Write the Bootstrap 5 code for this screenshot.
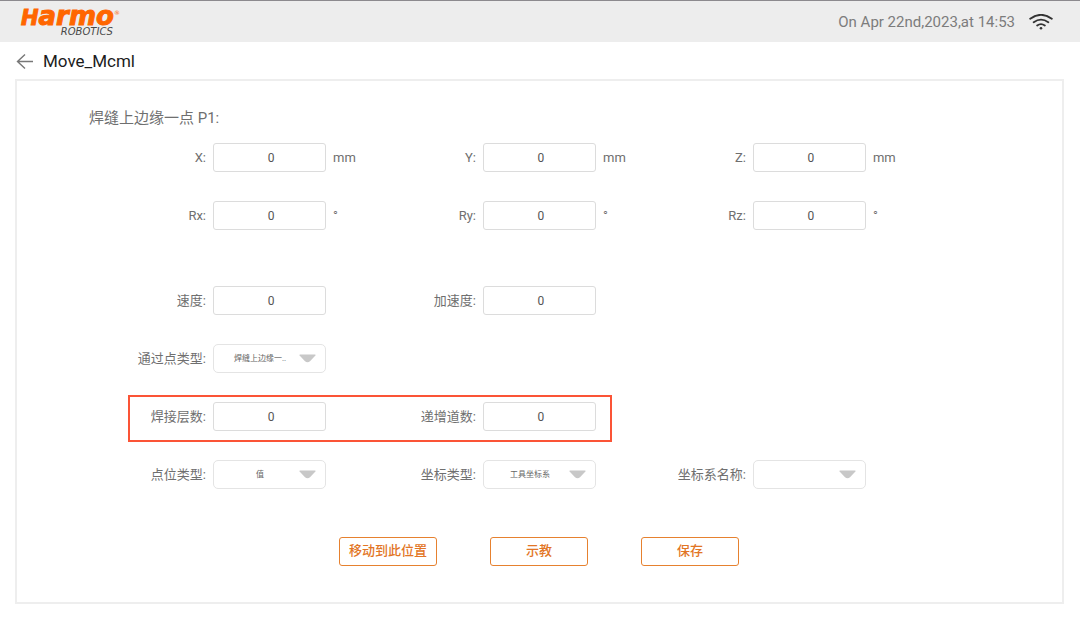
<!DOCTYPE html>
<html lang="zh-CN">
<head>
<meta charset="utf-8">
<meta name="viewport" content="width=device-width, initial-scale=1">
<title>Move_Mcml</title>
<link href="https://cdn.jsdelivr.net/npm/bootstrap@5.3.0/dist/css/bootstrap.min.css" rel="stylesheet">
<style>
  body { font-family: Roboto, "Noto Sans CJK SC", sans-serif; font-size: 13px; line-height: 20px; color: #6f6f6f; background: #fff; }
  .topbar { height: 42px; background: #ededed; border-top: 1px solid #8c8a8e; padding: 0 27px 0 21px; }
  .brand { color: #ff6600; text-decoration: none; font-family: "DejaVu Sans", sans-serif; font-weight: 700; font-style: italic; display: grid; }
  .brand-name { font-size: 26px; line-height: 20px; height: 20px; -webkit-text-stroke: 1px #ff6600; }
  .brand-cap { font-size: 21px; }
  .brand-reg { font-size: 6px; font-weight: 400; vertical-align: 10px; line-height: 1; -webkit-text-stroke: 0; }
  .brand-sub { font-weight: 400; font-size: 10px; line-height: 12px; color: #484848; justify-self: end; padding-right: 7px; }
  .clock { font-size: 15px; color: #7c7c7c; }
  .status { gap: 14px; }
  .titlebar { padding: 9px 16px 8px; gap: 9px; }
  .titlebar h1 { font-size: 17px; line-height: 20px; color: #1c1c1c; font-weight: 400; }
  .panel { margin: 0 16px 15px 15px; border: 2px solid #eee; border-radius: 0; padding: 27px 175px 36px 60px; }
  .panel h2 { font-size: 15px; line-height: 20px; font-weight: 400; margin: 0 0 15px 12px; }
  .form-rows { display: grid; row-gap: 29px; }
  .spaced { margin-top: 27px; }
  .field { display: flex; align-items: center; gap: 7px; }
  .field label { flex: 0 0 129px; text-align: right; }
  .field .form-control, .field .form-select {
    flex: 0 0 113px; width: 113px; height: 29px; border: 1px solid #dcdcdc; border-radius: 3px;
    padding: 0 0 0 3px; text-align: center; font-size: 12px; line-height: 16px; color: #555; background-color: #fff; }
  .field .form-select {
    font-size: 8px; color: #666; border-color: #e4e4e4; border-radius: 5px; padding: 0 28px 0 9px; text-align-last: center;
    background-image: url("data:image/svg+xml,%3Csvg xmlns='http://www.w3.org/2000/svg' viewBox='0 0 17 9'%3E%3Cpath fill='%23c8c8c8' d='M1 .5h15q1 .2.4 1L11 7.3Q8.500 9.200 6 7.300L.6 1.500Q0 .7 1 .5z'/%3E%3C/svg%3E");
    background-size: 17px 9px; background-position: right 9px center; }
  .unit-deg { align-self: flex-start; line-height: 29px; }
  .marked { position: relative; }
  .marked::before { content: ""; position: absolute; inset: -7px 5px -11px 51px; border: 2px solid #fb5436; pointer-events: none; }
  .actions { margin: 48px -114px 0 0; gap: 53px; }
  .actions .btn { width: 98px; height: 29px; padding: 0 0 2px; font-size: 13px; line-height: 20px; font-weight: 500; border: 1px solid #e6812f; border-radius: 3px; color: #e27525; background: #fff; }
  .actions .btn:hover { background: #fff4eb; }
  @media (max-width: 991px) {
    .panel { padding: 24px 16px; }
    .marked::before { inset: -7px 0; }
    .actions { margin-right: 0; gap: 16px; }
  }
</style>
</head>
<body>
<header class="topbar d-flex align-items-center justify-content-between">
  <a class="brand" href="#" aria-label="Harmo Robotics">
    <span class="brand-name"><span class="brand-cap">H</span>armo<span class="brand-reg">®</span></span>
    <span class="brand-sub">ROBOTICS</span>
  </a>
  <div class="status d-flex align-items-center">
    <time class="clock" datetime="2023-04-22T14:53">On Apr 22nd,2023,at 14:53</time>
    <svg width="24" height="16" viewBox="0 0 24 16" fill="none" stroke="#333" stroke-width="1.900" stroke-linecap="round" role="img" aria-label="Wi-Fi">
      <path d="M1.200 4.700Q12-3 22.800 4.700M4.700 8.200Q12 3 19.300 8.200M8.200 11.500Q12 8.700 15.800 11.500"/>
      <circle cx="12" cy="14.200" r="1.300" fill="#333" stroke="none"/>
    </svg>
  </div>
</header>

<div class="titlebar d-flex align-items-center">
  <a href="#" class="d-flex" aria-label="Back">
    <svg width="18" height="16" viewBox="0 0 18 16" fill="none" stroke="#777" stroke-width="1.400"><path d="M17 8.500H1.500M9 1.500L1.500 8.500L9 15.500"/></svg>
  </a>
  <h1 class="m-0">Move_Mcml</h1>
</div>

<main class="panel">
  <h2>焊缝上边缘一点 P1:</h2>
  <form class="form-rows">
    <div class="row g-0 row-cols-1 row-cols-lg-3">
      <div class="field"><label for="x">X:</label><input class="form-control" id="x" value="0"><span>mm</span></div>
      <div class="field"><label for="y">Y:</label><input class="form-control" id="y" value="0"><span>mm</span></div>
      <div class="field"><label for="z">Z:</label><input class="form-control" id="z" value="0"><span>mm</span></div>
    </div>
    <div class="row g-0 row-cols-1 row-cols-lg-3">
      <div class="field"><label for="rx">Rx:</label><input class="form-control" id="rx" value="0"><span class="unit-deg">°</span></div>
      <div class="field"><label for="ry">Ry:</label><input class="form-control" id="ry" value="0"><span class="unit-deg">°</span></div>
      <div class="field"><label for="rz">Rz:</label><input class="form-control" id="rz" value="0"><span class="unit-deg">°</span></div>
    </div>
    <div class="row g-0 row-cols-1 row-cols-lg-3 spaced">
      <div class="field"><label for="speed">速度:</label><input class="form-control" id="speed" value="0"></div>
      <div class="field"><label for="accel">加速度:</label><input class="form-control" id="accel" value="0"></div>
    </div>
    <div class="row g-0 row-cols-1 row-cols-lg-3">
      <div class="field"><label for="via">通过点类型:</label><select class="form-select" id="via"><option>焊缝上边缘一..</option></select></div>
    </div>
    <div class="row g-0">
      <div class="col-12 col-lg-8 marked">
        <div class="row g-0 row-cols-1 row-cols-lg-2">
          <div class="field"><label for="layers">焊接层数:</label><input class="form-control" id="layers" value="0"></div>
          <div class="field"><label for="passes">递增道数:</label><input class="form-control" id="passes" value="0"></div>
        </div>
      </div>
    </div>
    <div class="row g-0 row-cols-1 row-cols-lg-3">
      <div class="field"><label for="ptype">点位类型:</label><select class="form-select" id="ptype"><option>值</option></select></div>
      <div class="field"><label for="ctype">坐标类型:</label><select class="form-select" id="ctype"><option>工具坐标系</option></select></div>
      <div class="field"><label for="cname">坐标系名称:</label><select class="form-select" id="cname"><option></option></select></div>
    </div>
  </form>
  <div class="actions d-flex flex-wrap justify-content-center">
    <button type="button" class="btn">移动到此位置</button>
    <button type="button" class="btn">示教</button>
    <button type="button" class="btn">保存</button>
  </div>
</main>
<script src="https://cdn.jsdelivr.net/npm/bootstrap@5.3.0/dist/js/bootstrap.bundle.min.js"></script>
</body>
</html>
